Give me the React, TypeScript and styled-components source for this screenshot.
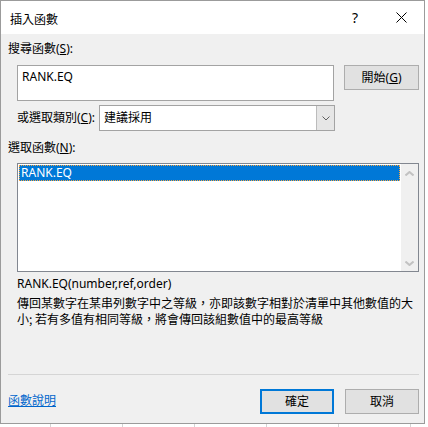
import React from "react";
import styled, { createGlobalStyle } from "styled-components";

const Global = createGlobalStyle`
  html, body { margin: 0; padding: 0; }
  body {
    width: 428px;
    height: 427px;
    overflow: hidden;
    background-color: #ffffff;
    background-image: repeating-linear-gradient(to right, transparent 0 50px, #d4d4d4 50px 51px, transparent 51px 72px);
    font-family: "Noto Sans", "Noto Sans CJK TC", sans-serif;
    font-size: 12px;
    color: #000;
  }
`;

const Window = styled.div`
  box-sizing: border-box;
  width: 425px;
  height: 424px;
  border: 1px solid #9b9b9b;
  background: #f0f0f0;
  display: flex;
  flex-direction: column;
`;

const TitleBar = styled.div`
  height: 33px;
  background: #ffffff;
  display: flex;
  align-items: stretch;
  flex: none;
`;

const Title = styled.div`
  flex: 1;
  padding: 10px 0 0 9px;
  line-height: 16px;
  font-family: "Noto Sans CJK TC", sans-serif;
  font-size: 12px;
`;

const CaptionButton = styled.div`
  width: 46px;
  display: flex;
  align-items: center;
  justify-content: center;
  font-size: 14px;
  color: #000;
`;

const Body = styled.div`
  flex: 1;
  display: flex;
  flex-direction: column;
  padding: 7px 5px 9px 7px;
`;

const Label = styled.div<{ $mt?: number; $indent?: number }>`
  line-height: 16px;
  height: 16px;
  margin-top: ${(p) => p.$mt ?? 0}px;
  margin-left: ${(p) => p.$indent ?? 0}px;
  white-space: nowrap;
`;

const Row = styled.div<{ $mt: number }>`
  display: flex;
  align-items: flex-start;
  margin-top: ${(p) => p.$mt}px;
  margin-left: 9px;
`;

const SearchBox = styled.div`
  box-sizing: border-box;
  width: 318px;
  height: 36px;
  background: #fff;
  border: 1px solid #a3a3a3;
  padding: 3px 4px;
  line-height: 16px;
`;

const Button = styled.div<{ $default?: boolean; $w?: number }>`
  box-sizing: border-box;
  width: ${(p) => p.$w ?? 75}px;
  height: 25px;
  background: #e1e1e1;
  border: ${(p) => (p.$default ? "2px solid #0078d7" : "1px solid #adadad")};
  display: flex;
  align-items: center;
  justify-content: center;
  line-height: 16px;
  flex: none;
`;

const CategoryRow = styled.div`
  display: flex;
  align-items: center;
  margin-top: 4px;
  margin-left: 9px;
`;

const CategoryLabel = styled.div`
  width: 82px;
  line-height: 16px;
  white-space: nowrap;
`;

const Select = styled.div`
  box-sizing: border-box;
  width: 236px;
  height: 26px;
  border: 1px solid #a3a3a3;
  background: #fff;
  display: flex;
`;

const SelectText = styled.div`
  flex: 1;
  padding-left: 4px;
  display: flex;
  align-items: center;
  line-height: 16px;
`;

const SelectArrow = styled.div`
  width: 17px;
  background: #e6e6e6;
  border-left: 1px solid #bcbcbc;
  display: flex;
  align-items: center;
  justify-content: center;
`;

const ListBox = styled.div`
  box-sizing: border-box;
  width: 402px;
  height: 109px;
  margin-top: 7px;
  margin-left: 9px;
  border: 1px solid #828790;
  background: #fff;
  display: flex;
`;

const ListItems = styled.div`
  flex: 1;
  padding: 1px;
`;

const ListItem = styled.div<{ $selected?: boolean }>`
  height: 16px;
  line-height: 16px;
  padding-left: 2px;
  background: ${(p) => (p.$selected ? "#0078d7" : "transparent")};
  color: ${(p) => (p.$selected ? "#fff" : "#000")};
  outline: ${(p) => (p.$selected ? "1px dotted #f7a541" : "none")};
  outline-offset: -1px;
`;

const ScrollBar = styled.div`
  width: 17px;
  background: #f0f0f0;
  display: flex;
  flex-direction: column;
  align-items: center;
  justify-content: space-between;
  padding: 7px 0 5px;
  box-sizing: border-box;
`;

const Signature = styled.div`
  margin-top: 4px;
  margin-left: 9px;
  line-height: 16px;
`;

const Description = styled.div`
  margin-top: 3px;
  margin-left: 9px;
  width: 402px;
  line-height: 16px;
  font-family: "Noto Sans CJK TC", sans-serif;
`;

const Footer = styled.div`
  margin-top: auto;
  display: flex;
  flex-direction: column;
`;

const Separator = styled.div`
  height: 1px;
  width: 411px;
  background: #d5d5d5;
`;

const ButtonRow = styled.div`
  display: flex;
  align-items: center;
  margin-top: 14px;
`;

const HelpLink = styled.a`
  color: #0066cc;
  text-decoration: underline;
  line-height: 16px;
  font-family: "Noto Sans CJK TC", sans-serif;
  margin-right: auto;
  margin-top: -4px;
`;

const ButtonGroup = styled.div`
  display: flex;
  gap: 11px;
`;

const Chevron = ({ up, color, w, h, sw }: { up?: boolean; color: string; w: number; h: number; sw: number }) => (
  <svg width={w} height={h} viewBox={`0 0 ${w} ${h}`} style={{ display: "block" }}>
    <polyline
      points={up ? `0.5,${h - 0.5} ${w / 2},1 ${w - 0.5},${h - 0.5}` : `0.5,0.5 ${w / 2},${h - 1} ${w - 0.5},0.5`}
      fill="none"
      stroke={color}
      strokeWidth={sw}
    />
  </svg>
);

export default function App() {
  return (
    <>
      <Global />
      <Window>
        <TitleBar>
          <Title>插入函數</Title>
          <CaptionButton>?</CaptionButton>
          <CaptionButton>
            <svg width="11" height="11" viewBox="0 0 11 11">
              <path d="M0.5 0.5 L10.5 10.5 M10.5 0.5 L0.5 10.5" stroke="#000" strokeWidth="1" />
            </svg>
          </CaptionButton>
        </TitleBar>
        <Body>
          <Label>
            搜尋函數(<u>S</u>):
          </Label>
          <Row $mt={8}>
            <SearchBox>RANK.EQ</SearchBox>
            <Button style={{ marginLeft: 10 }}>
              開始(<u>G</u>)
            </Button>
          </Row>
          <CategoryRow>
            <CategoryLabel>
              或選取類別(<u>C</u>):
            </CategoryLabel>
            <Select>
              <SelectText>建議採用</SelectText>
              <SelectArrow>
                <Chevron color="#606060" w={8} h={5} sw={1} />
              </SelectArrow>
            </Select>
          </CategoryRow>
          <Label $mt={9}>
            選取函數(<u>N</u>):
          </Label>
          <ListBox>
            <ListItems>
              <ListItem $selected>RANK.EQ</ListItem>
            </ListItems>
            <ScrollBar>
              <Chevron up color="#c2c2c2" w={9} h={5} sw={2} />
              <Chevron color="#c2c2c2" w={9} h={5} sw={2} />
            </ScrollBar>
          </ListBox>
          <Signature>RANK.EQ(number,ref,order)</Signature>
          <Description>
            傳回某數字在某串列數字中之等級，亦即該數字相對於清單中其他數值的大小; 若有多值有相同等級，將會傳回該組數值中的最高等級
          </Description>
          <Footer>
            <Separator />
            <ButtonRow>
              <HelpLink>函數說明</HelpLink>
              <ButtonGroup>
                <Button $default $w={74}>確定</Button>
                <Button $w={74}>取消</Button>
              </ButtonGroup>
            </ButtonRow>
          </Footer>
        </Body>
      </Window>
    </>
  );
}
